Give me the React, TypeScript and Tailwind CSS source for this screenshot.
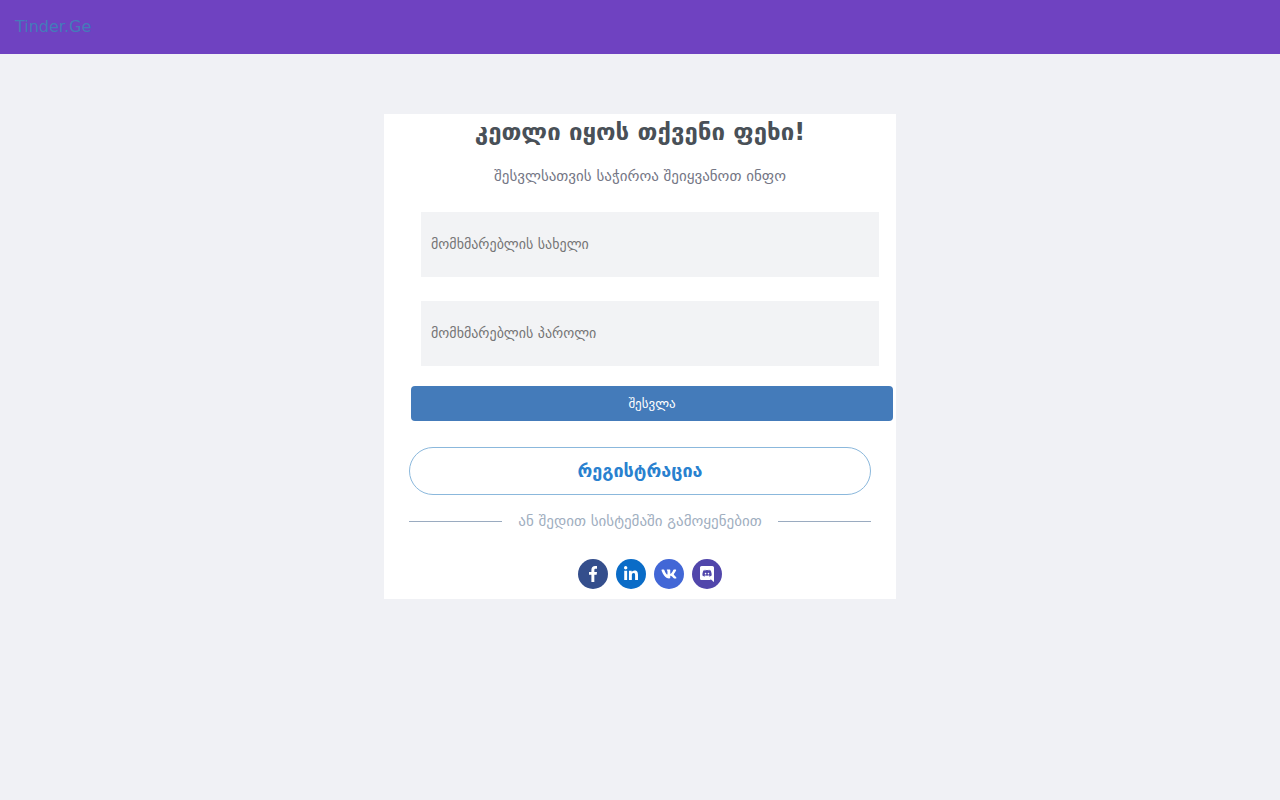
import { useState } from 'react'
import { FaLinkedinIn, FaVk } from 'react-icons/fa'

const FacebookIcon = () => (
    <svg viewBox="0 0 264 512" fill="currentColor" className="h-[1em]">
        <path d="M76.7 512V283H0v-91h76.7v-71.7C76.7 42.4 124.3 0 193.8 0c33.3 0 61.9 2.5 70.2 3.6V85h-48.2c-37.8 0-45.1 18-45.1 44.3V192H256l-11.7 91h-73.6v229" />
    </svg>
)

const DiscordIcon = () => (
    <svg viewBox="0 0 448 512" fill="currentColor" className="size-[1em]">
        <path d="M297.216 243.2c0 15.616-11.52 28.416-26.112 28.416-14.336 0-26.112-12.8-26.112-28.416s11.52-28.416 26.112-28.416c14.592 0 26.112 12.8 26.112 28.416zm-119.552-28.416c-14.592 0-26.112 12.8-26.112 28.416s11.776 28.416 26.112 28.416c14.592 0 26.112-12.8 26.112-28.416.256-15.616-11.52-28.416-26.112-28.416zM448 52.736V512c-64.494-56.994-43.868-38.128-118.784-107.776l13.568 47.36H52.48C23.552 451.584 0 428.032 0 398.848V52.736C0 23.552 23.552 0 52.48 0h343.04C424.448 0 448 23.552 448 52.736zm-72.96 242.688c0-82.432-36.864-149.248-36.864-149.248-36.864-27.648-71.936-26.88-71.936-26.88l-3.584 4.096c43.52 13.312 63.744 32.512 63.744 32.512-60.811-33.329-132.244-33.335-191.232-7.424-9.472 4.352-15.104 7.424-15.104 7.424s21.248-20.224 67.328-33.536l-2.56-3.072s-35.072-.768-71.936 26.88c0 0-36.864 66.816-36.864 149.248 0 0 21.504 37.12 78.08 38.912 0 0 9.472-11.52 17.152-21.248-32.512-9.728-44.8-30.208-44.8-30.208 3.766 2.636 9.976 6.053 10.496 6.4 43.21 24.198 104.588 32.126 159.744 8.96 8.96-3.328 18.944-8.192 29.44-15.104 0 0-12.8 20.992-46.336 30.464 7.68 9.728 16.896 20.736 16.896 20.736 56.576-1.792 78.336-38.912 78.336-38.912z" />
    </svg>
)

const socials = [
    { name: 'Facebook', icon: <FacebookIcon />, color: 'bg-[#344e8c]' },
    { name: 'LinkedIn', icon: <FaLinkedinIn />, color: 'bg-[#0a6cc7]' },
    { name: 'VK', icon: <FaVk />, color: 'bg-[#4267d6]' },
    { name: 'Discord', icon: <DiscordIcon />, color: 'bg-[#5146ab]' },
]

const Field = ({ label, type, value, setValue }: any) => {
    return (
        <input
            type={type}
            aria-label={label}
            placeholder={label}
            value={value}
            onChange={(e) => setValue(e.target.value)}
            className="block w-full h-[65px] px-[10px] pb-[2px] bg-[#f2f3f5] text-sm text-gray-800 placeholder:text-[#757575] outline-none"
        />
    )
}

const Login = () => {

    const [userName, setUserName] = useState('')
    const [password, setPassword] = useState('')

    return (
        <main className="w-2/5 mx-auto mt-[60px] pb-[10px] bg-white">
            <h1 className="text-center text-2xl leading-9 font-bold text-[#495057]">კეთლი იყოს თქვენი ფეხი!</h1>
            <p className="mt-4 text-center text-[15px] leading-5 text-[#747685]">შესვლსათვის საჭიროა შეიყვანოთ ინფო</p>

            <form onSubmit={(e) => e.preventDefault()} className="mt-[26px]">
                <div className="flex flex-col gap-6 pl-[37px] pr-[17px]">
                    <Field label="მომხმარებლის სახელი" type="text" value={userName} setValue={setUserName} />
                    <Field label="მომხმარებლის პაროლი" type="password" value={password} setValue={setPassword} />
                </div>
                <div className="mt-5 pl-[27px] pr-[3px]">
                    <button type="submit" className="block w-full h-[35px] rounded bg-[#447bba] text-[13px] text-white cursor-pointer">შესვლა</button>
                </div>
            </form>

            <div className="px-[25px]">
                <button type="button" className="block w-full h-12 mt-[26px] rounded-full border border-[#8bb8dc] text-lg font-bold text-[#2981cf] cursor-pointer">რეგისტრაცია</button>

                <div className="flex items-center gap-4 mt-4 text-[15px] leading-5 text-[#a0aec0]">
                    <span className="flex-1 h-px bg-[#9aabc0]" />
                    <span>ან შედით სისტემაში გამოყენებით</span>
                    <span className="flex-1 h-px bg-[#9aabc0]" />
                </div>

                <div className="flex justify-center gap-2 mt-7 pl-5">
                    {socials.map((item) => (
                        <a key={item.name} href="#" aria-label={item.name} className={`${item.color} flex items-center justify-center size-[30px] rounded-full text-base text-white`}>
                            {item.icon}
                        </a>
                    ))}
                </div>
            </div>
        </main>
    )
}

const App = () => {
    return (
        <div className="min-h-screen bg-[#f0f1f5] font-['DejaVu_Sans',sans-serif]">
            <header className="flex items-center h-[54px] px-[15px] bg-[#6f42c1]">
                <a href="#" className="text-base text-[#447bba]">Tinder.Ge</a>
            </header>
            <div className="flow-root">
                <Login />
            </div>
        </div>
    )
}

export default App
